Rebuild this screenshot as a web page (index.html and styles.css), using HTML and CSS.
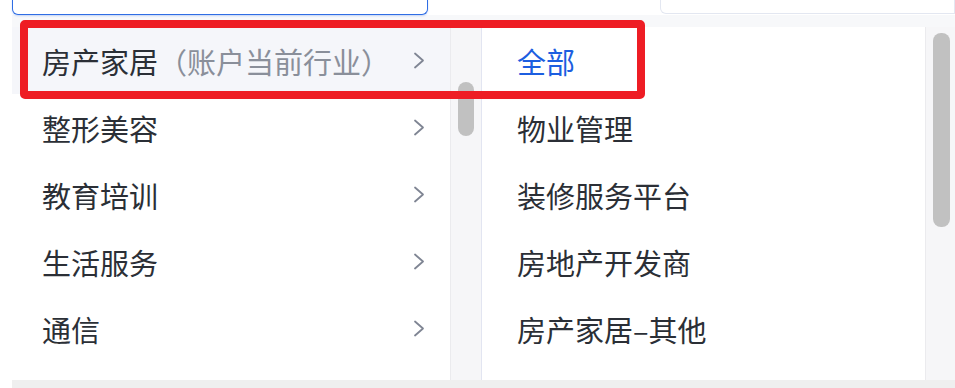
FILE: index.html
```html
<!DOCTYPE html>
<html lang="zh-CN">
<head>
    <meta charset="UTF-8">
    <meta name="viewport" content="width=device-width, initial-scale=1.0">
    <title>行业选择</title>
    <link rel="stylesheet" href="styles.css">
</head>
<body>
    <div class="sheet">
        <div class="topbar">
            <div class="fields">
                <div class="field field-active"></div>
                <div class="field field-plain"></div>
            </div>
        </div>
        <div class="cascader">
            <ul class="menu menu-first">
                <li class="item active">
                    <span>房产家居<span class="hint">（账户当前行业）</span></span>
                    <svg class="arrow" width="12" height="17" viewBox="0 0 12 17"><polyline points="2,1.5 10,8.5 2,15.5" fill="none" stroke="#7f8593" stroke-width="1.8" stroke-linecap="round" stroke-linejoin="round"/></svg>
                </li>
                <li class="item">
                    <span>整形美容</span>
                    <svg class="arrow" width="12" height="17" viewBox="0 0 12 17"><polyline points="2,1.5 10,8.5 2,15.5" fill="none" stroke="#7f8593" stroke-width="1.8" stroke-linecap="round" stroke-linejoin="round"/></svg>
                </li>
                <li class="item">
                    <span>教育培训</span>
                    <svg class="arrow" width="12" height="17" viewBox="0 0 12 17"><polyline points="2,1.5 10,8.5 2,15.5" fill="none" stroke="#7f8593" stroke-width="1.8" stroke-linecap="round" stroke-linejoin="round"/></svg>
                </li>
                <li class="item">
                    <span>生活服务</span>
                    <svg class="arrow" width="12" height="17" viewBox="0 0 12 17"><polyline points="2,1.5 10,8.5 2,15.5" fill="none" stroke="#7f8593" stroke-width="1.8" stroke-linecap="round" stroke-linejoin="round"/></svg>
                </li>
                <li class="item">
                    <span>通信</span>
                    <svg class="arrow" width="12" height="17" viewBox="0 0 12 17"><polyline points="2,1.5 10,8.5 2,15.5" fill="none" stroke="#7f8593" stroke-width="1.8" stroke-linecap="round" stroke-linejoin="round"/></svg>
                </li>
            </ul>
            <div class="track track-first"><div class="thumb"></div></div>
            <ul class="menu menu-second">
                <li class="item selected">全部</li>
                <li class="item">物业管理</li>
                <li class="item">装修服务平台</li>
                <li class="item">房地产开发商</li>
                <li class="item">房产家居–其他</li>
            </ul>
            <div class="track track-second"><div class="thumb"></div></div>
        </div>
        <div class="band"></div>
    </div>
    <!-- annotation box drawn over the first row -->
    <div class="mark"></div>
</body>
</html>
```

FILE: styles.css
```css
body{
    margin:0;
    padding:0;
    background:#fff;
    font-family:"Noto Sans CJK SC","Noto Sans",sans-serif;
    width:955px;
    height:388px;
    overflow:hidden;
    position:relative;
}
.sheet{
    margin-left:12px;
}
.topbar{
    height:27px;
    background:linear-gradient(#fff 15px,#f7f8fa 15px);
}
.fields{
    display:flex;
    height:15px;
}
.field{
    box-sizing:border-box;
    background:#fff;
    border-top:none;
}
.field-active{
    width:416px;
    height:16px;
    margin-top:-1px;
    border:1.5px solid #2f6de4;
    border-top:none;
    border-radius:0 0 6px 6px;
    box-shadow:0 1px 2px rgba(47,109,228,.25);
}
.field-plain{
    flex:1;
    margin-left:232px;
    height:14px;
    border:1px solid #e3e7f1;
    border-top:none;
    border-radius:0 0 0 6px;
}
.cascader{
    display:flex;
    height:353px;
    background:#fff;
}
.menu{
    list-style:none;
    margin:0;
    padding:0;
}
.menu-first{
    width:438px;
}
.menu-second{
    width:443px;
}
.item{
    height:67px;
    display:flex;
    align-items:center;
    font-size:29px;
    color:#2b2f36;
    white-space:nowrap;
}
.menu-first .item{
    justify-content:space-between;
    padding:0 25px 0 30px;
}
.menu-first .item.active{
    background:#f5f6fa;
}
.hint{
    color:#8a8f9a;
}
.arrow{
    display:block;
}
.menu-second .item{
    padding-left:35px;
}
.menu-second .item.selected{
    color:#1c5ee0;
}
.track{
    box-sizing:border-box;
    background:#f6f6f8;
}
.track .thumb{
    background:#c1c1c1;
    border-radius:8px;
}
.track-first{
    width:32px;
    border-left:1px solid #ebebee;
    border-right:1px solid #e2e5f1;
    padding:55px 0 0 7px;
}
.track-first .thumb{
    width:16px;
    height:54px;
}
.track-second{
    width:30px;
    border-left:1px solid #ebebee;
    padding:6px 0 0 7px;
}
.track-second .thumb{
    width:17px;
    height:194px;
}
.band{
    height:8px;
    background:#efefef;
}
.mark{
    position:absolute;
    left:20px;
    top:20px;
    width:625px;
    height:79px;
    box-sizing:border-box;
    border:8px solid #ee1d24;
    border-radius:5px;
}
```
